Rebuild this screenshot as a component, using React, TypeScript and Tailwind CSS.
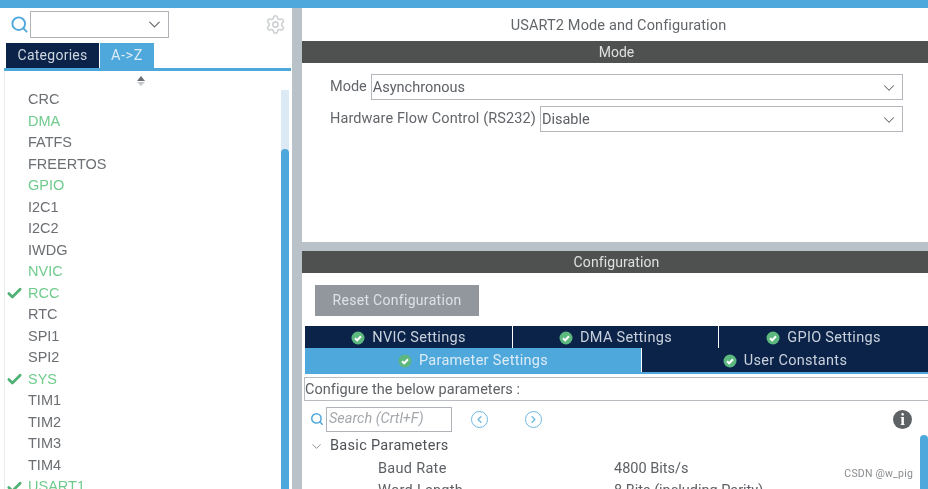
import { Check, ChevronDown, ChevronLeft, ChevronRight, Search, Settings } from "lucide-react";

const items = [
  { name: "CRC" },
  { name: "DMA", color: "green" },
  { name: "FATFS" },
  { name: "FREERTOS" },
  { name: "GPIO", color: "green" },
  { name: "I2C1" },
  { name: "I2C2" },
  { name: "IWDG" },
  { name: "NVIC", color: "green" },
  { name: "RCC", color: "green", checked: true },
  { name: "RTC" },
  { name: "SPI1" },
  { name: "SPI2" },
  { name: "SYS", color: "green", checked: true },
  { name: "TIM1" },
  { name: "TIM2" },
  { name: "TIM3" },
  { name: "TIM4" },
  { name: "USART1", color: "green", checked: true },
];

function OkIcon() {
  return (
    <svg width="14" height="14" viewBox="0 0 14 14" className="shrink-0">
      <circle cx="7" cy="7" r="6.5" fill="#5cb87e" />
      <path d="M4 7.2l2.2 2.1L10 5.3" fill="none" stroke="#fff" strokeWidth="2" />
    </svg>
  );
}

function Tab({ label, active, className }: { label: string; active?: boolean; className: string }) {
  return (
    <div
      className={`flex items-center justify-center gap-[7px] pt-[1px] tracking-[0.3px] ${
        active ? "bg-[#4fa8dc] text-[#dcecf6]" : "bg-[#0b2349] text-[#c9d2dc]"
      } ${className}`}
    >
      <OkIcon />
      <span>{label}</span>
    </div>
  );
}

function SelectBox({ value }: { value: string }) {
  return (
    <div className="flex-1 h-[26px] border border-[#b4b8bc] flex items-center justify-between pl-[1px] pr-[4px] pt-[1px] text-[#5d6165]">
      <span>{value}</span>
      <ChevronDown size={18} strokeWidth={1.4} className="text-[#66696c]" />
    </div>
  );
}

export default function App() {
  return (
    <div className="w-[928px] h-[489px] overflow-hidden bg-white flex flex-col relative blur-[0.6px] font-['Roboto',sans-serif] text-[14.5px]">
      <div className="h-[8px] shrink-0 bg-[#4fa8dc]" />
      <div className="flex-1 flex min-h-0">
        {/* left panel */}
        <div className="w-[292px] shrink-0 flex flex-col">
          <div className="h-[35px] shrink-0 flex items-center pb-[2px] pl-[10px] pr-[6px]">
            <Search size={19} strokeWidth={2.4} className="text-[#4fa8dc]" />
            <div className="ml-[1px] w-[139px] h-[27px] border border-[#b0b4b8] flex items-center justify-end pr-[4px]">
              <ChevronDown size={19} strokeWidth={1.5} className="text-[#66696c]" />
            </div>
            <Settings size={21} strokeWidth={1.8} className="ml-auto text-[#cdd0d2]" />
          </div>
          <div className="h-[25px] shrink-0 flex pl-[6px]">
            <div className="w-[93px] bg-[#0b2349] text-[#cdd6df] text-[14px] flex items-center justify-center tracking-[0.25px]">
              Categories
            </div>
            <div className="ml-[1px] w-[54px] bg-[#4fa8dc] text-[#dcecf6] flex items-center justify-center tracking-[0.6px]">
              A-&gt;Z
            </div>
          </div>
          <div className="h-[3px] shrink-0 bg-[#4fa8dc] ml-[4px] mr-[1px]" />
          <div className="flex-1 min-h-0 flex ml-[4px] border-l border-[#e8ecef]">
            <div className="flex-1 min-w-0 flex flex-col">
              <div className="h-[18.4px] shrink-0 flex flex-col items-center justify-center gap-[1px] pr-[5px] pt-[1px]">
                <div className="w-0 h-0 border-x-[4px] border-x-transparent border-b-[5px] border-b-[#6b6f73]" />
                <div className="w-0 h-0 border-x-[4px] border-x-transparent border-t-[4px] border-t-[#c5c8cb]" />
              </div>
              <div className="font-['Liberation_Sans',sans-serif]">
                {items.map((item) => (
                  <div key={item.name} className="h-[21.5px] flex items-center">
                    <div className="w-[23px] shrink-0 flex pl-[1px]">
                      {item.checked && <Check size={17} strokeWidth={3.8} className="text-[#4fb174]" />}
                    </div>
                    <span className={item.color ? "text-[#6fcb8c]" : "text-[#6b6e72]"}>{item.name}</span>
                  </div>
                ))}
              </div>
            </div>
            <div className="w-[8px] shrink-0 mt-[19px] mr-[3px] bg-[#dceaf6] flex flex-col">
              <div className="h-[59px] shrink-0" />
              <div className="flex-1 bg-[#4fa8dc] rounded-t-[4px]" />
            </div>
          </div>
        </div>

        {/* splitter */}
        <div className="w-[10px] shrink-0 bg-[#b9c1c9]" />

        {/* right panel */}
        <div className="flex-1 min-w-0 flex flex-col">
          <div className="h-[234px] shrink-0 flex flex-col">
            <div className="h-[33px] shrink-0 flex items-center justify-center pt-[2px] pl-[7px] text-[#62666a] tracking-[0.13px]">
              USART2 Mode and Configuration
            </div>
            <div className="h-[22px] shrink-0 bg-[#4f5150] text-[#dfe1e1] flex items-center justify-center pl-[3px] pt-[1px] text-[14px]">
              Mode
            </div>
            <div className="flex flex-col gap-[6px] pt-[11px] pl-[28px] pr-[25px] text-[#62666a]">
              <div className="flex items-center gap-[4px]">
                <span>Mode</span>
                <SelectBox value="Asynchronous" />
              </div>
              <div className="flex items-center gap-[4px]">
                <span className="tracking-[0.1px]">Hardware Flow Control (RS232)</span>
                <SelectBox value="Disable" />
              </div>
            </div>
          </div>
          <div className="h-[9px] shrink-0 bg-[#b9c1c9]" />
          <div className="h-[22px] shrink-0 bg-[#4f5150] text-[#dfe1e1] text-[14px] tracking-[0.1px] flex items-center justify-center pl-[3px] pt-[1px]">
            Configuration
          </div>
          <div className="pt-[12px] pl-[13px] shrink-0">
            <div className="w-[164px] h-[31px] bg-[#91979d] text-[#dfe2e4] text-[14px] flex items-center justify-center tracking-[0.3px]">
              Reset Configuration
            </div>
          </div>
          <div className="mt-[10px] ml-[3px] shrink-0">
            <div className="h-[22px] flex gap-[1px]">
              <Tab label="NVIC Settings" className="w-[207px]" />
              <Tab label="DMA Settings" className="w-[205px]" />
              <Tab label="GPIO Settings" className="flex-1" />
            </div>
            <div className="h-[26px] flex gap-[1px] border-b-[2px] border-[#4fa8dc]">
              <Tab label="Parameter Settings" active className="w-[336px]" />
              <Tab label="User Constants" className="flex-1" />
            </div>
          </div>
          <div className="ml-[2px] mt-[3px] h-[24px] shrink-0 border-y border-[#b8bcc0] border-l text-[#5d6165] flex items-center pt-[1px] tracking-[0.05px]">
            Configure the below parameters :
          </div>
          <div className="flex-1 min-h-0 flex">
            <div className="flex-1 min-w-0 pl-[8px] overflow-hidden">
              <div className="flex items-center h-[33px] pt-[3px]">
                <Search size={14} strokeWidth={2.6} className="text-[#4fa8dc]" />
                <div className="ml-[2px] w-[126px] h-[25px] border border-[#b0b4b8] flex items-center pl-[2px] italic text-[#a4a8ac]">
                  Search (Crtl+F)
                </div>
                <div className="ml-[19px] w-[17px] h-[17px] rounded-full border-[1.5px] border-[#6fb8e2] flex items-center justify-center">
                  <ChevronLeft size={11} strokeWidth={3} className="text-[#6fb8e2]" />
                </div>
                <div className="ml-[37px] w-[17px] h-[17px] rounded-full border-[1.5px] border-[#6fb8e2] flex items-center justify-center">
                  <ChevronRight size={11} strokeWidth={3} className="text-[#6fb8e2]" />
                </div>
                <div className="ml-auto mr-[8px] w-[19px] h-[19px] rounded-full bg-[#5f6264] flex items-center justify-center text-white">
                  <span className="font-bold text-[17px] leading-none font-['Liberation_Serif',serif]">i</span>
                </div>
              </div>
              <div className="flex items-center h-[22px] pt-[2px] text-[#4e5257] tracking-[0.3px]">
                <ChevronDown size={15} strokeWidth={1.4} className="text-[#7c8084] -ml-[1px]" />
                <span className="ml-[6px]">Basic Parameters</span>
              </div>
              <div className="flex items-center h-[23px] pt-[2px] text-[#5d6165]">
                <span className="ml-[68px] w-[236px] tracking-[0.3px]">Baud Rate</span>
                <span>4800 Bits/s</span>
              </div>
              <div className="flex items-center h-[21px] pt-[2px] text-[#5d6165]">
                <span className="ml-[68px] w-[236px] tracking-[0.3px]">Word Length</span>
                <span>8 Bits (including Parity)</span>
              </div>
            </div>
            <div className="w-[8px] shrink-0 mt-[34px] bg-[#4fa8dc] rounded-t-[4px]" />
          </div>
        </div>
      </div>
      <div className="absolute right-[15px] top-[466px] text-[10.5px] text-[#8a8d90] tracking-[0.2px]">CSDN @w_pig</div>
    </div>
  );
}
